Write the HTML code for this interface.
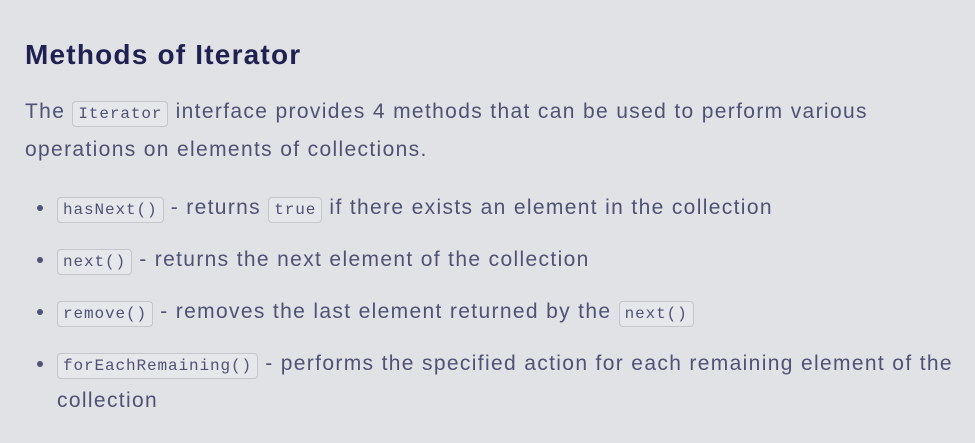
<!DOCTYPE html>
<html><head><meta charset="utf-8"><style>
html,body{margin:0;padding:0;background:#e1e2e5;width:975px;height:443px;overflow:hidden}
body{font-family:"Liberation Sans",sans-serif;color:#4f5275;}
h2{position:absolute;left:25px;top:39px;margin:0;font-size:28px;font-weight:bold;color:#1f2151;letter-spacing:1.2px}
p{position:absolute;left:25px;top:93px;margin:0;font-size:21px;line-height:38px;width:880px;letter-spacing:1.35px}
code{font-family:"Liberation Mono",monospace;font-size:16px;line-height:1;background:#e6e7ea;border:1px solid #c4c6cc;border-radius:4px;padding:3px 5px;letter-spacing:0.9px}
ul{position:absolute;left:0;top:189px;margin:0;padding:0 0 0 57px;width:915px;list-style:none;font-size:21px;line-height:37px;letter-spacing:1.35px}
li{position:relative;margin-bottom:15px}
li:before{content:"";position:absolute;left:-20px;top:16px;width:6px;height:6px;border-radius:50%;background:#4f5275}
</style></head><body>
<h2>Methods of Iterator</h2>
<p>The <code>Iterator</code> interface provides 4 methods that can be used to perform various operations on elements of collections.</p>
<ul>
<li><code>hasNext()</code> - returns <code>true</code> if there exists an element in the collection</li>
<li><code>next()</code> - returns the next element of the collection</li>
<li><code>remove()</code> - removes the last element returned by the <code>next()</code></li>
<li><code>forEachRemaining()</code> - performs the specified action for each remaining element of the collection</li>
</ul>
</body></html>
